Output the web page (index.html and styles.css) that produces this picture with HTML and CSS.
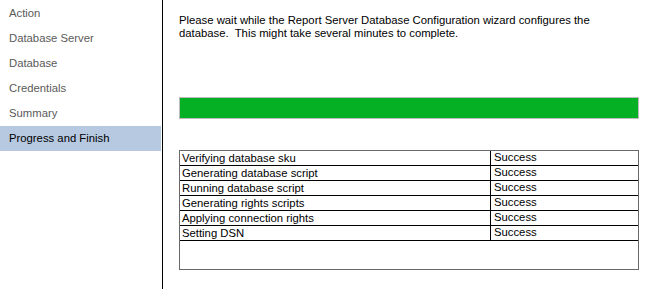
FILE: index.html
```html
<!DOCTYPE html>
<html lang="en">
<head>
    <meta charset="UTF-8">
    <title>Report Server Database Configuration Wizard</title>
    <link rel="stylesheet" href="styles.css">
</head>
<body>
    <div class="wizard">
        <div class="steps">
            <div class="step">Action</div>
            <div class="step">Database Server</div>
            <div class="step">Database</div>
            <div class="step">Credentials</div>
            <div class="step">Summary</div>
            <div class="step active">Progress and Finish</div>
        </div>
        <div class="divider"></div>
        <div class="content">
            <p class="intro">Please wait while the Report Server Database Configuration wizard configures the database.&nbsp; This might take several minutes to complete.</p>

            <div class="progress">
                <div class="progress-fill"></div>
            </div>

            <div class="results">
                <table class="result-table">
                    <tr><td class="task">Verifying database sku</td><td class="status">Success</td></tr>
                    <tr><td class="task">Generating database script</td><td class="status">Success</td></tr>
                    <tr><td class="task">Running database script</td><td class="status">Success</td></tr>
                    <tr><td class="task">Generating rights scripts</td><td class="status">Success</td></tr>
                    <tr><td class="task">Applying connection rights</td><td class="status">Success</td></tr>
                    <tr><td class="task">Setting DSN</td><td class="status">Success</td></tr>
                </table>
            </div>
        </div>
    </div>
</body>
</html>
```

FILE: styles.css
```css
body {
    margin: 0;
    background-color: #ffffff;
    font-family: "Liberation Sans", Arial, sans-serif;
    font-size: 11.3px;
    color: #000;
}

.wizard {
    display: flex;
    height: 289px;
}

/* left list of steps */
.steps {
    width: 161px;
    padding-top: 1px;
}

.step {
    height: 25px;
    line-height: 25px;
    padding-left: 9px;
    color: #5a5a5a;
}

.step.active {
    background-color: #b6c9e1;
    color: #000;
}

.divider {
    width: 1px;
    margin-left: 1px;
    background-color: #000;
}

.content {
    flex: 1;
    padding-left: 16px;
    padding-right: 19px;
}

.intro {
    margin: 14px 0 0 0;
    line-height: 13px;
    width: 420px;
}

.progress {
    margin-top: 57px;
    height: 20px;
    border: 1px solid #bcbcbc;
    background-color: #e6e6e6;
}

.progress-fill {
    height: 100%;
    width: 100%;
    background-color: #06b025;
}

.results {
    margin-top: 31px;
    height: 118px;
    border: 1px solid #696969;
}

.result-table {
    width: 100%;
    border-collapse: collapse;
}

.result-table td {
    height: 14px;
    padding: 0 0 0 2px;
    line-height: 14px;
    border-bottom: 1px solid #000;
    white-space: nowrap;
}

.result-table .task {
    width: 308px;
    border-right: 1px solid #000;
}

.result-table .status {
    padding-left: 3px;
    line-height: 12px;
    vertical-align: top;
}
```
